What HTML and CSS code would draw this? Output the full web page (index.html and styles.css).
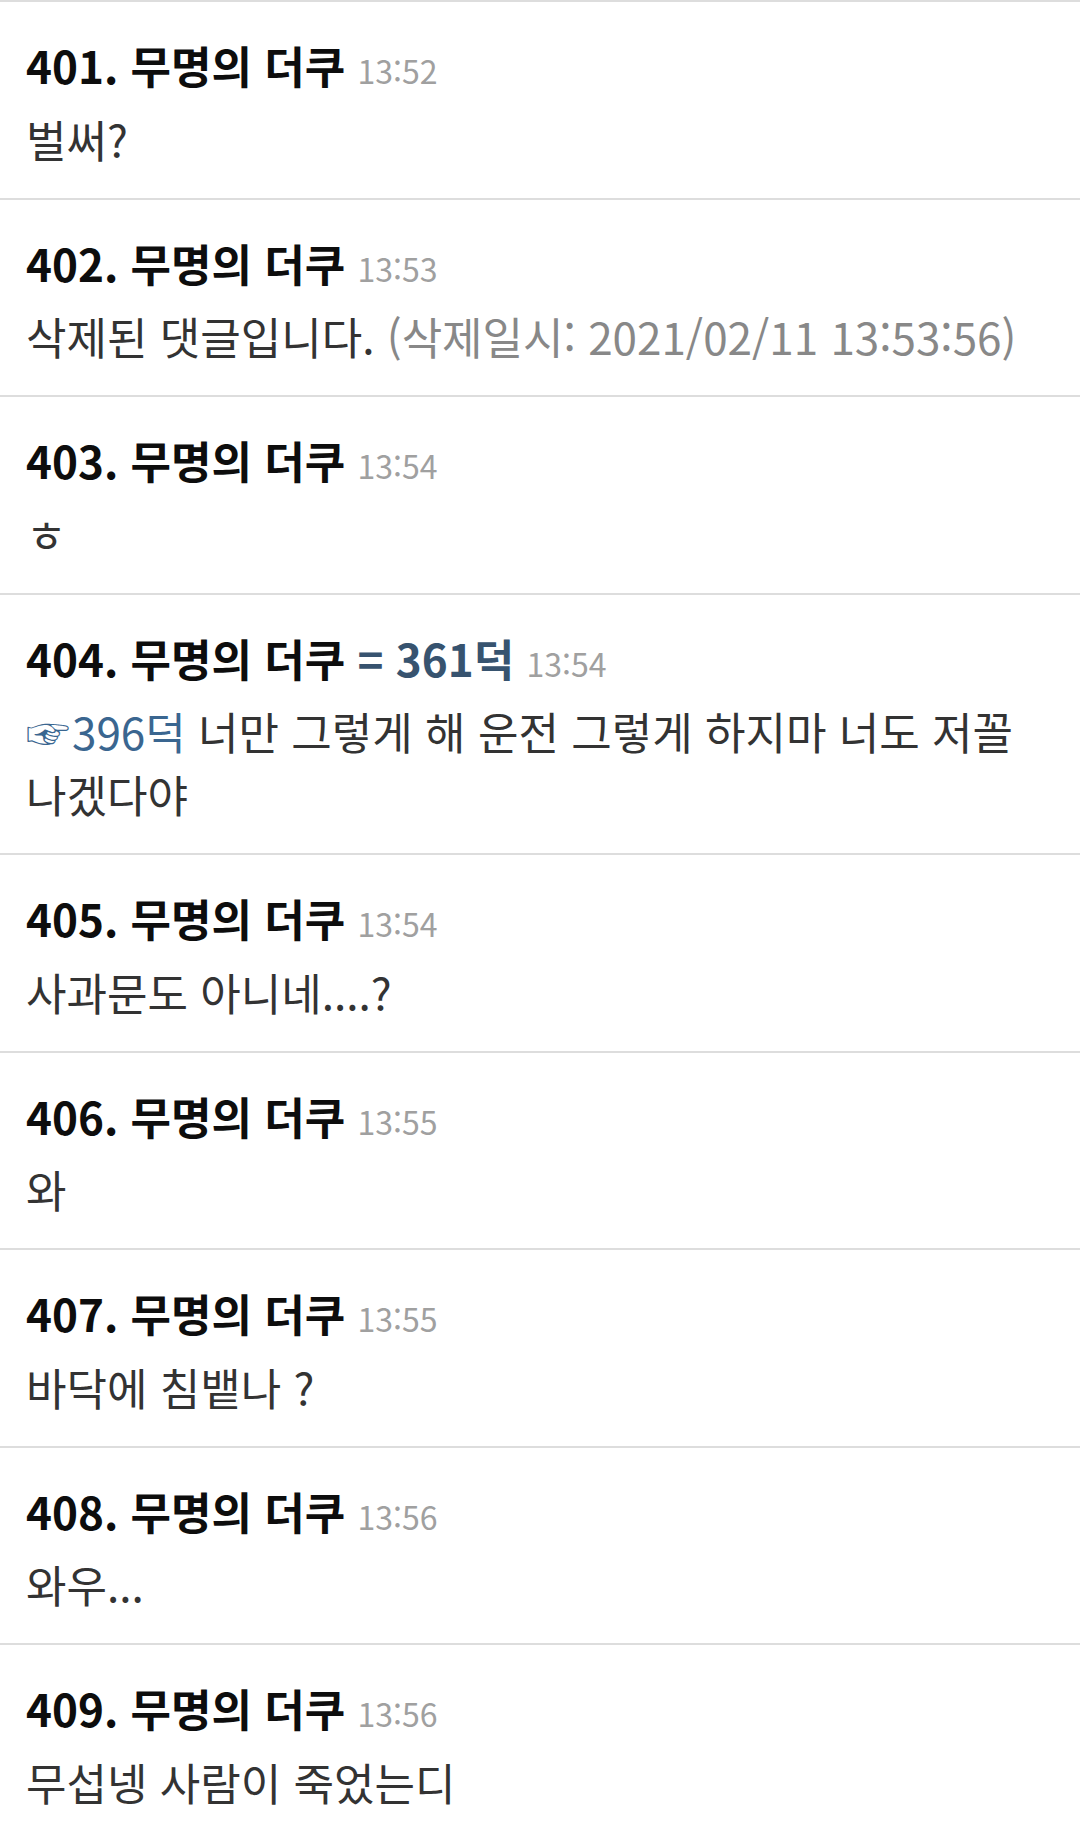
FILE: index.html
```html
<!DOCTYPE html>
<html lang="ko">
<head>
  <meta charset="UTF-8">
  <meta name="viewport" content="width=device-width, initial-scale=1.0">
  <title>댓글</title>
  <link rel="stylesheet" href="styles.css">
</head>
<body>
  <ul class="comments">
    <li class="comment">
      <div class="head">401. 무명의 더쿠 <span class="time">13:52</span></div>
      <div class="text">벌써?</div>
    </li>
    <li class="comment">
      <div class="head">402. 무명의 더쿠 <span class="time">13:53</span></div>
      <div class="text">삭제된 댓글입니다. <span class="deleted">(삭제일시: 2021/02/11 13:53:56)</span></div>
    </li>
    <li class="comment">
      <div class="head">403. 무명의 더쿠 <span class="time">13:54</span></div>
      <div class="text">ㅎ</div>
    </li>
    <li class="comment">
      <div class="head">404. 무명의 더쿠 <span class="same">= 361덕</span> <span class="time">13:54</span></div>
      <div class="text"><a class="reply" href="#c396"><span class="hand">☞</span>396덕</a> 너만 그렇게 해 운전 그렇게 하지마 너도 저꼴 나겠다야</div>
    </li>
    <li class="comment">
      <div class="head">405. 무명의 더쿠 <span class="time">13:54</span></div>
      <div class="text">사과문도 아니네....?</div>
    </li>
    <li class="comment">
      <div class="head">406. 무명의 더쿠 <span class="time">13:55</span></div>
      <div class="text">와</div>
    </li>
    <li class="comment">
      <div class="head">407. 무명의 더쿠 <span class="time">13:55</span></div>
      <div class="text">바닥에 침뱉나 ?</div>
    </li>
    <li class="comment">
      <div class="head">408. 무명의 더쿠 <span class="time">13:56</span></div>
      <div class="text">와우...</div>
    </li>
    <li class="comment">
      <div class="head">409. 무명의 더쿠 <span class="time">13:56</span></div>
      <div class="text">무섭넹 사람이 죽었는디</div>
    </li>
  </ul>
</body>
</html>
```

FILE: styles.css
```css
body {
  margin: 0;
  background-color: #fff;
  font-family: "Noto Sans CJK KR", "Noto Sans", sans-serif;
  color: #333;
}
.comments {
  list-style: none;
  margin: 0;
  padding: 0;
}
.comment {
  border-top: 2px solid #dddddd;
  padding: 33px 26px 27px;
}
.head {
  font-size: 44px;
  font-weight: bold;
  line-height: 60px;
  color: #0d0d0d;
  margin-bottom: 12.5px;
}
.head span {
  line-height: 1;
}
.head .same {
  color: #37536f;
}
.head .time {
  font-size: 32px;
  font-weight: normal;
  color: #a0a0a0;
}
.text {
  font-size: 44px;
  line-height: 63px;
  color: #333;
  word-break: keep-all;
}
.text span,
.text a {
  line-height: 1;
}
.text .deleted {
  color: #888;
}
.reply {
  color: #3a6690;
  text-decoration: none;
}
.reply .hand {
  margin-right: 2px;
}
```
